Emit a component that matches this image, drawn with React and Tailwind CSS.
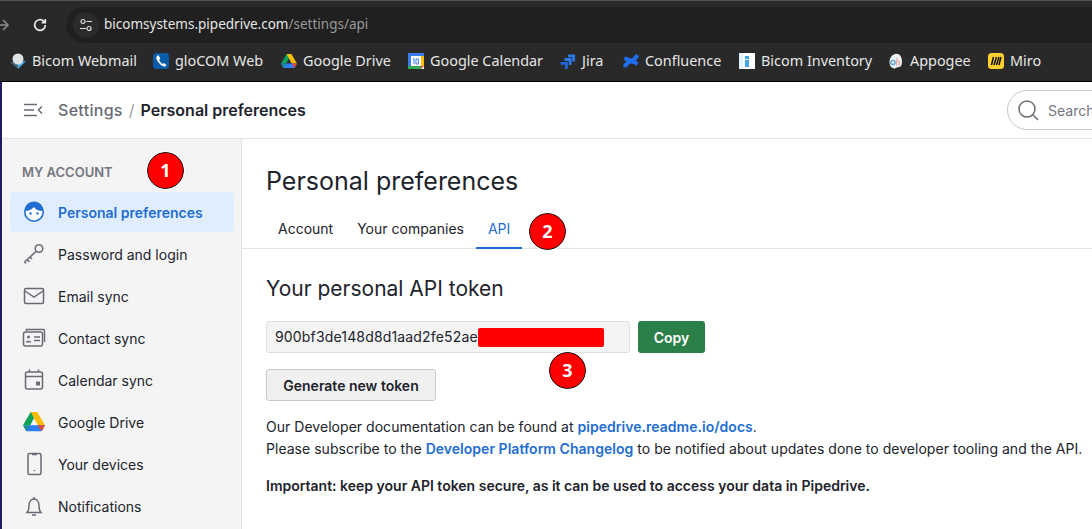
import React from "react";

const Bookmark = ({ icon, label, className = "" }) => (
  <div className={`flex items-center gap-[6px] ${className}`}>
    <span className="w-[16px] h-[16px] flex items-center justify-center shrink-0">{icon}</span>
    <span className="text-[14.4px] leading-none text-[#e6e6e6] whitespace-nowrap">{label}</span>
  </div>
);

const DriveIcon = ({ size = 16 }) => (
  <svg width={size} height={size * 0.9} viewBox="0 0 20 18">
    <path d="M7 0h6l-3.2 6L6.6 12H0z" fill="#0fa05a" />
    <path d="M7 0h6l7 12h-6.6z" fill="#fbbc04" />
    <path d="M0 12h20l-3 5.5H3z" fill="#2d7ff0" />
    <path d="M0 12h6.6L3.4 17.5z" fill="#0f9d58" opacity="0.6" />
    <path d="M13.4 12H20l-3 5.5z" fill="#ea4335" />
  </svg>
);

const bookmarks = [
  {
    label: "Bicom Webmail",
    gap: "w-[143px]",
    icon: (
      <svg width="16" height="16" viewBox="0 0 16 16">
        <path d="M0 9l8 7V9z" fill="#456577" />
        <path d="M16 8l-8 8V9z" fill="#4fb0ea" />
        <circle cx="8" cy="6" r="5.500" fill="#dfe3e6" />
      </svg>
    ),
  },
  {
    label: "gloCOM Web",
    gap: "w-[128px]",
    icon: (
      <svg width="16" height="16" viewBox="0 0 16 16">
        <rect width="16" height="16" rx="3.500" fill="#0a5ca8" />
        <path d="M4.500 2.500c-1.600 1-1.500 3 0 5.500s4 5 6.500 5.600c1.300.3 2.200-.7 2.500-1.600l-2.600-2-1.400 1c-1.300-.7-2.800-2.700-3.400-4.200l1.200-1.100L5.700 2.300z" fill="#fff" />
      </svg>
    ),
  },
  { label: "Google Drive", gap: "w-[127px]", icon: <DriveIcon /> },
  {
    label: "Google Calendar",
    gap: "w-[152px]",
    icon: (
      <svg width="16" height="16" viewBox="0 0 16 16">
        <rect width="16" height="16" fill="#fff" />
        <path d="M0 0h16v3H0z" fill="#3b7ded" />
        <path d="M0 0h3v13H0z" fill="#3b7ded" />
        <path d="M13 3h3v10h-3z" fill="#fbbc04" />
        <path d="M0 13h13v3H0z" fill="#34a853" />
        <path d="M13 13h3l-3 3z" fill="#ea4335" />
        <path d="M5 6l1-.6V11M8 6h2.400v5H8z" fill="none" stroke="#3b7ded" strokeWidth="1" />
      </svg>
    ),
  },
  {
    label: "Jira",
    gap: "w-[63px]",
    icon: (
      <svg width="17" height="17" viewBox="0 0 16 16" fill="none" stroke="#2a78ea" strokeWidth="2.800">
        <path d="M8 2.300H13.700V8" />
        <path d="M4.500 6H10.200V11.500" />
        <path d="M0.500 9.800H6.400V15.500" stroke="#1f66d6" />
      </svg>
    ),
  },
  {
    label: "Confluence",
    gap: "w-[116px]",
    icon: (
      <svg width="18" height="18" viewBox="0 0 16 16" fill="none" stroke="#1f6fee" strokeWidth="4">
        <path d="M1.500 14c3.500-6 6.500-7 13-3" />
        <path d="M14.500 2c-3.500 6-6.500 7-13 3" />
      </svg>
    ),
  },
  {
    label: "Bicom Inventory",
    gap: "w-[149px]",
    icon: (
      <svg width="16" height="16" viewBox="0 0 16 16">
        <rect width="16" height="16" fill="#fff" />
        <rect x="0" y="0" width="4" height="16" fill="#e3f2fd" />
        <rect x="6" y="3" width="4" height="3" fill="#3ea6ee" />
        <rect x="6" y="7" width="4" height="7" fill="#3ea6ee" />
      </svg>
    ),
  },
  {
    label: "Appogee",
    gap: "w-[100px]",
    icon: (
      <svg width="16" height="16" viewBox="0 0 16 16">
        <path d="M7 1c4-1 7 2 7 7.500 0 4-1.500 6-3.500 5.500L9 14.500 7 15.500c-3.500 0-5.500-2.500-5.500-6.500 0-4 2.500-7.200 5.500-8z" fill="#eceff1" />
        <circle cx="5" cy="9.500" r="2.100" fill="none" stroke="#5aa2d8" strokeWidth="1.400" />
        <path d="M8.800 5v7.500M8.800 8.500h2.700v4" fill="none" stroke="#f0a49a" strokeWidth="1.200" />
      </svg>
    ),
  },
  {
    label: "Miro",
    gap: "",
    icon: (
      <svg width="16" height="16" viewBox="0 0 16 16">
        <rect width="16" height="16" rx="3.500" fill="#ffd02f" />
        <path d="M5.500 4L3.500 12M8.500 4L6 12M11 4L8.500 12M13 4L11 12" stroke="#111" strokeWidth="1.500" fill="none" />
      </svg>
    ),
  },
];

const ic = { width: 24, height: 24, viewBox: "0 0 24 24", fill: "none", stroke: "#686b74", strokeWidth: 1.500 };

const navItems = [
  {
    label: "Personal preferences",
    active: true,
    icon: (
      <svg width="24" height="24" viewBox="0 0 24 24">
        <circle cx="12" cy="12" r="9.200" fill="#fff" stroke="#1f6dd0" strokeWidth="1.600" />
        <path d="M3 11c3 0 6-1 9-4 2 3 5 4 9 4 0-6-4-9.500-9-9.500S3 5 3 11z" fill="#1f6dd0" />
        <circle cx="8.500" cy="13.500" r="1.200" fill="#1f6dd0" />
        <circle cx="15.500" cy="13.500" r="1.200" fill="#1f6dd0" />
      </svg>
    ),
  },
  {
    label: "Password and login",
    icon: (
      <svg {...ic}>
        <circle cx="17" cy="6.500" r="3.800" />
        <path d="M14 9.500L2.500 20M5 17.500l2.500 2.500M8 15l2 2M2.500 20l1.500 1.500" />
      </svg>
    ),
  },
  {
    label: "Email sync",
    icon: (
      <svg {...ic}>
        <rect x="2.500" y="4.500" width="19" height="15" rx="1.500" />
        <path d="M3 7l9 6 9-6" />
      </svg>
    ),
  },
  {
    label: "Contact sync",
    icon: (
      <svg {...ic}>
        <path d="M4.500 5V3.500h17a1.500 1.500 0 0 1 1 1.500v11" />
        <rect x="1.500" y="6" width="19" height="14" rx="2" />
        <circle cx="6.500" cy="11" r="1.500" fill="#686b74" stroke="none" />
        <path d="M3.500 16.500c.5-2.500 5.500-2.500 6 0z" fill="#686b74" stroke="none" />
        <path d="M12 11h6M12 14.500h6" />
      </svg>
    ),
  },
  {
    label: "Calendar sync",
    icon: (
      <svg {...ic}>
        <rect x="3.500" y="4" width="17" height="17" rx="2" />
        <path d="M7.500 1.500V4M16.500 1.500V4M3.500 8.500h17" />
        <rect x="14" y="13.500" width="4" height="4" fill="#686b74" stroke="none" />
      </svg>
    ),
  },
  { label: "Google Drive", icon: <DriveIcon size={22} /> },
  {
    label: "Your devices",
    icon: (
      <svg {...ic}>
        <rect x="6" y="1.500" width="13" height="21" rx="1.500" />
        <path d="M10 2.500h5" />
        <circle cx="12.500" cy="18.500" r="0.800" fill="#686b74" stroke="none" />
      </svg>
    ),
  },
  {
    label: "Notifications",
    icon: (
      <svg {...ic}>
        <path d="M5 18.500c1.500-1.500 2-3 2-6.500 0-4 2-7 5-7s5 3 5 7c0 3.500.5 5 2 6.500z" />
        <path d="M12 5V3M10 21h4" />
      </svg>
    ),
  },
];

const Badge = ({ n, className }) => (
  <div
    className={`absolute w-[37px] h-[37px] rounded-full bg-[#ff0000] border-[1.5px] border-black outline outline-1 outline-white flex items-center justify-center text-white text-[18px] font-bold ${className}`}
    style={{ fontFamily: '"Open Sans", sans-serif' }}
  >
    {n}
  </div>
);

export default function App() {
  return (
    <div className="relative w-[1092px] h-[529px] overflow-hidden bg-white flex flex-col" style={{ fontFamily: "Inter, sans-serif" }}>
      {/* browser toolbar */}
      <div className="h-[43px] bg-[#292929] border-t-[1px] border-[#555] flex items-center pt-[6px] shrink-0">
        <svg className="ml-[-4px]" width="14" height="14" viewBox="0 0 14 14" fill="none" stroke="#8a8a8a" strokeWidth="1.500">
          <path d="M1 7h11M7 2l5 5-5 5" />
        </svg>
        <svg className="ml-[22px]" width="16" height="16" viewBox="0 0 24 24" fill="none" stroke="#e8e8e8" strokeWidth="2.500">
          <path d="M20 12a8 8 0 1 1-2.500-5.800L20 8.500M20 3v5.500h-5.500" />
        </svg>
        <div className="ml-[18px] flex-1 h-[36px] bg-[#202020] rounded-l-full flex items-center">
          <div className="ml-[7px] w-[26px] h-[26px] rounded-full bg-[#2b2b2b] flex items-center justify-center">
            <svg width="14" height="14" viewBox="0 0 14 14" fill="none" stroke="#e3e3e3" strokeWidth="1.200">
              <circle cx="4" cy="3.500" r="2" />
              <path d="M7.500 3.500H13M1 10.500h6" />
              <circle cx="10" cy="10.500" r="2" />
            </svg>
          </div>
          <span className="ml-[5px] pb-[1px] text-[13.500px] text-[#e6e6e6] whitespace-nowrap" style={{ fontFamily: '"Noto Sans", sans-serif' }}>
            bicomsystems.pipedrive.com<span className="text-[#9a9a9a]">/settings/api</span>
          </span>
        </div>
      </div>

      {/* bookmarks */}
      <div className="h-[39px] bg-[#292929] border-b-[1px] border-black flex items-center pl-[10px] pb-[2px] shrink-0" style={{ fontFamily: '"Noto Sans", sans-serif' }}>
        {bookmarks.map((b) => (
          <Bookmark key={b.label} icon={b.icon} label={b.label} className={`${b.gap} shrink-0`} />
        ))}
      </div>

      {/* page */}
      <div className="flex-1 flex flex-col border-l-[2px] border-[#1e1b5e] min-h-0">
        {/* header */}
        <div className="h-[57px] border-b border-[#e3e3e3] flex items-center shrink-0 relative">
          <svg className="ml-[20px]" width="22" height="16" viewBox="0 0 22 16" fill="none" stroke="#686b74" strokeWidth="1.500">
            <path d="M2 2.500h13M2 8h10M2 13.500h13M20 4.500L16.500 8l3.500 3.500" />
          </svg>
          <span className="ml-[14px] text-[16px] font-medium tracking-[0.3px] text-[#686b74]">Settings</span>
          <span className="ml-[6px] text-[16px] text-[#9a9da5]">/</span>
          <span className="ml-[6px] text-[16px] font-semibold text-[#21232c]">Personal preferences</span>
          <div className="ml-auto mr-[-40px] w-[125px] h-[40px] shrink-0 rounded-l-[20px] border border-[#c6c8cc] flex items-center pl-[8px]">
            <svg width="24" height="24" viewBox="0 0 24 24" fill="none" stroke="#686b74" strokeWidth="1.500">
              <circle cx="11" cy="11" r="8" />
              <path d="M17 17l5 5" />
            </svg>
            <span className="ml-[8px] text-[14px] text-[#747780]">Search</span>
          </div>
        </div>

        <div className="flex-1 flex min-h-0">
          {/* sidebar */}
          <aside className="w-[240px] shrink-0 bg-[#f4f4f4] border-r border-[#e3e3e3] pl-[8px] pr-[7px]">
            <div className="h-[53px] pl-[12px] pt-[25px] text-[13px] leading-[16px] font-semibold text-[#747780]">MY ACCOUNT</div>
            <div className="flex flex-col gap-[2px]">
              {navItems.map((n) => (
                <div
                  key={n.label}
                  className={`h-[40px] rounded-[4px] flex items-center pl-[12px] ${n.active ? "bg-[#e0edff]" : ""}`}
                >
                  <span className="w-[24px] h-[24px] flex items-center justify-center shrink-0">{n.icon}</span>
                  <span className={`ml-[12px] text-[14px] whitespace-nowrap ${n.active ? "font-semibold text-[#1f6dd0]" : "text-[#21232c]"}`}>
                    {n.label}
                  </span>
                </div>
              ))}
            </div>
          </aside>

          {/* main */}
          <main className="flex-1 min-w-0">
            <h1 className="pl-[24px] pt-[26px] text-[25px] leading-[32px] text-[#21232c]">Personal preferences</h1>
            <div className="mt-[16px] h-[36px] border-b border-[#e3e3e3] flex pl-[24px] text-[14px] text-[#21232c]">
              <span className="px-[12px] h-[36px] leading-[32px]">Account</span>
              <span className="px-[12px] h-[36px] leading-[32px]">Your companies</span>
              <span className="px-[12px] h-[36px] leading-[32px] text-[#1f6dd0] border-b-[2px] border-[#1f6dd0]">API</span>
            </div>
            <div className="pl-[24px]">
              <h2 className="mt-[24px] text-[21px] leading-[32px] text-[#21232c]">Your personal API token</h2>
              <div className="mt-[16px] flex gap-[8px]">
                <div className="relative w-[364px] h-[32px] rounded-[3px] bg-[#f4f4f4] border border-[#e0e0e0] pl-[8px] text-[14px] tracking-[0.16px] leading-[30px] text-[#21232c]">
                  900bf3de148d8d1aad2fe52ae
                  <div className="absolute left-[211px] top-[6px] w-[126px] h-[19px] bg-[#ff0000] rounded-[2px]" />
                </div>
                <div className="w-[67px] h-[32px] rounded-[3px] bg-[#2b8049] text-white text-[14px] font-semibold flex items-center justify-center">Copy</div>
              </div>
              <div className="mt-[16px] w-[170px] h-[32px] rounded-[3px] bg-[#f0f0f0] border border-[#c6c8cc] text-[14px] font-semibold text-[#21232c] flex items-center justify-center">
                Generate new token
              </div>
              <div className="mt-[16px] text-[14px] tracking-[0.03px] leading-[22px] text-[#21232c] whitespace-nowrap">
                <p className="-mt-[1px]">
                  Our Developer documentation can be found at{" "}
                  <span className="font-semibold text-[#1f6dd0]">pipedrive.readme.io/docs</span>.
                </p>
                <p>
                  Please subscribe to the <span className="font-semibold text-[#1f6dd0]">Developer Platform Changelog</span> to be notified about updates done to developer tooling and the API.
                </p>
                <p className="mt-[15px] font-semibold tracking-normal">Important: keep your API token secure, as it can be used to access your data in Pipedrive.</p>
              </div>
            </div>
          </main>
        </div>
      </div>

      <Badge n="1" className="left-[147px] top-[152px]" />
      <Badge n="2" className="left-[529px] top-[213px]" />
      <Badge n="3" className="left-[549px] top-[352px]" />
    </div>
  );
}
